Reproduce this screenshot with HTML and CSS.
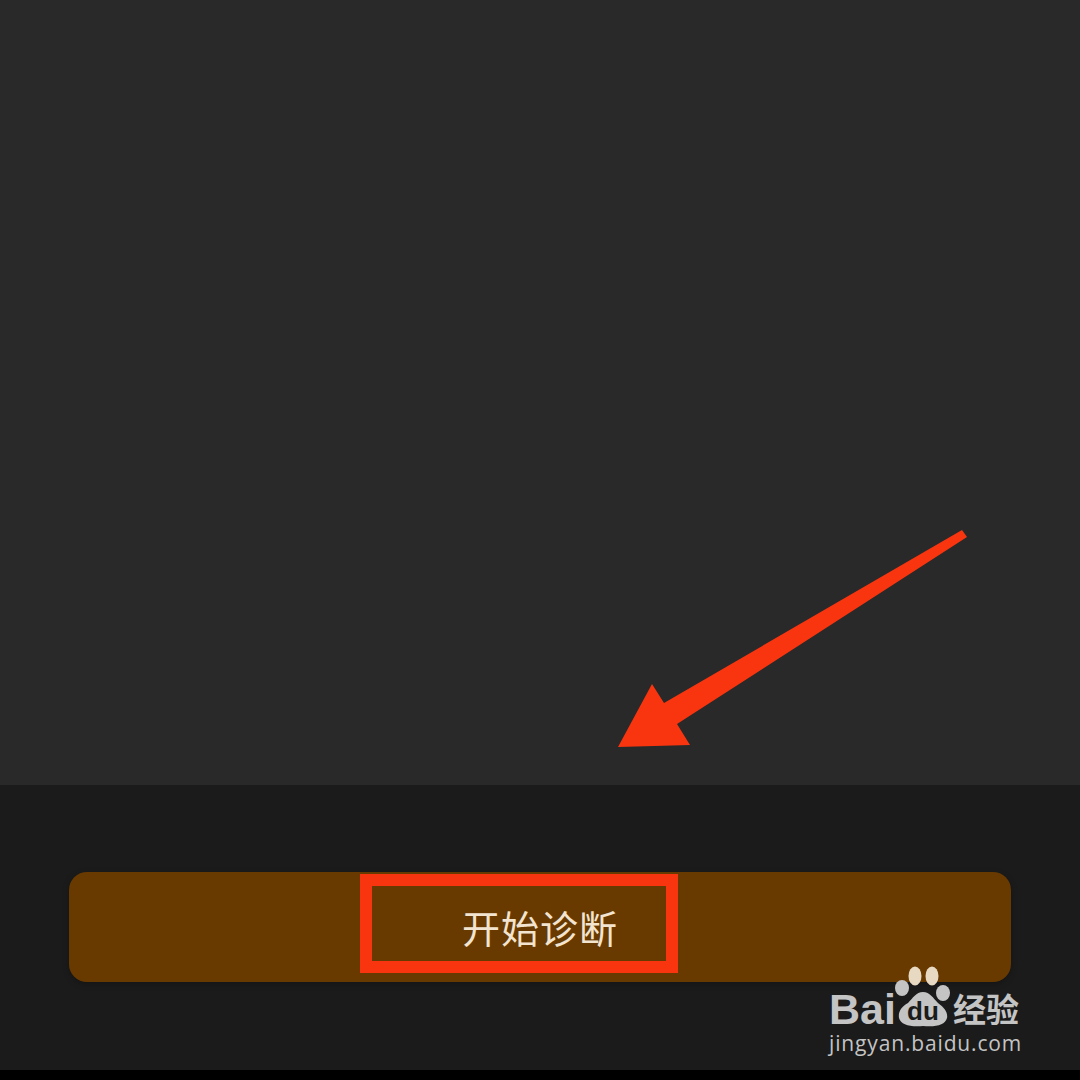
FILE: index.html
```html
<!DOCTYPE html>
<html>
<head>
  <meta charset="utf-8">
  <link rel="stylesheet" href="styles.css">
</head>
<body>
  <div class="screen">
    <div class="content"></div>

    <div class="footer">
      <div class="start-btn">
        <span class="start-label">开始诊断</span>
        <div class="highlight-box"></div>
      </div>
    </div>

    <div class="bottom-strip"></div>

    <svg class="arrow" width="1080" height="1080" viewBox="0 0 1080 1080">
      <polygon points="962,530 967,537 677,724 690,745 618,747 652,684 664,703" fill="#f9350f"/>
    </svg>

    <div class="watermark">
      <div class="watermark-top">
        <span class="wm-bai">Bai</span>
        <svg class="wm-paw" width="64" height="62" viewBox="0 0 64 62">
          <ellipse cx="11" cy="22" rx="7" ry="8" fill="#c4c4c4"/>
          <ellipse cx="52" cy="27" rx="7" ry="8" fill="#c4c4c4"/>
          <ellipse cx="24" cy="10" rx="6.5" ry="9.5" fill="#e8d9c3"/>
          <ellipse cx="41" cy="10" rx="6.5" ry="9.5" fill="#e8d9c3"/>
          <path d="M32 26 C39 26 42 32 47 37 C54 42 57 47 56 52 C54 59 46 61 32 60 C19 61 10 59 8 52 C7 46 10 41 17 37 C22 32 25 26 32 26 Z" fill="#c4c4c4"/>
        </svg>
        <span class="wm-du">du</span>
        <span class="wm-jingyan">经验</span>
      </div>
      <div class="wm-url">jingyan.baidu.com</div>
    </div>
  </div>
</body>
</html>
```

FILE: styles.css
```css
body {
  margin: 0;
  background-color: #000000;
  font-family: "Noto Sans CJK SC", "Liberation Sans", sans-serif;
}

.screen {
  position: relative;
  width: 1080px;
  height: 1080px;
  overflow: hidden;
  display: flex;
  flex-direction: column;
}

.content {
  height: 785px;
  background-color: #292929;
}

.footer {
  height: 285px;
  padding: 87px 69px 0;
  box-sizing: border-box;
  background-color: #1b1b1b;
}

.bottom-strip {
  height: 10px;
  background-color: #000000;
}

.start-btn {
  position: relative;
  display: flex;
  justify-content: center;
  align-items: center;
  height: 110px;
  padding-bottom: 1px;
  box-sizing: border-box;
  background-color: #683a00;
  border-radius: 18px;
  box-shadow: 0 2px 6px rgba(0, 0, 0, 0.25);
}

.start-label {
  font-size: 38px;
  line-height: 1;
  letter-spacing: 1px;
  color: #f3e4d0;
}

.highlight-box {
  position: absolute;
  left: 291px;
  top: 2px;
  width: 318px;
  height: 99px;
  box-sizing: border-box;
  border: 12px solid #f9350f;
}

.arrow {
  position: absolute;
  left: 0;
  top: 0;
}

.watermark {
  position: absolute;
  left: 829px;
  top: 966px;
  width: 195px;
  color: #c4c4c4;
}

.watermark-top {
  position: relative;
  height: 62px;
}

.wm-bai {
  position: absolute;
  left: 0;
  top: 19px;
  font-family: "Liberation Sans", sans-serif;
  font-size: 43px;
  line-height: 48px;
  font-weight: bold;
}

.wm-paw {
  position: absolute;
  left: 62px;
  top: 0;
}

.wm-du {
  position: absolute;
  left: 78px;
  top: 31px;
  font-family: "Liberation Sans", sans-serif;
  font-size: 26px;
  line-height: 28px;
  font-weight: bold;
  color: #1b1b1b;
}

.wm-jingyan {
  position: absolute;
  left: 124px;
  top: 23px;
  font-size: 33px;
  line-height: 38px;
  font-weight: 700;
  white-space: nowrap;
}

.wm-url {
  margin-top: 2px;
  font-family: "Open Sans", sans-serif;
  font-size: 21px;
  line-height: 26px;
  letter-spacing: 0.85px;
  white-space: nowrap;
}
```
